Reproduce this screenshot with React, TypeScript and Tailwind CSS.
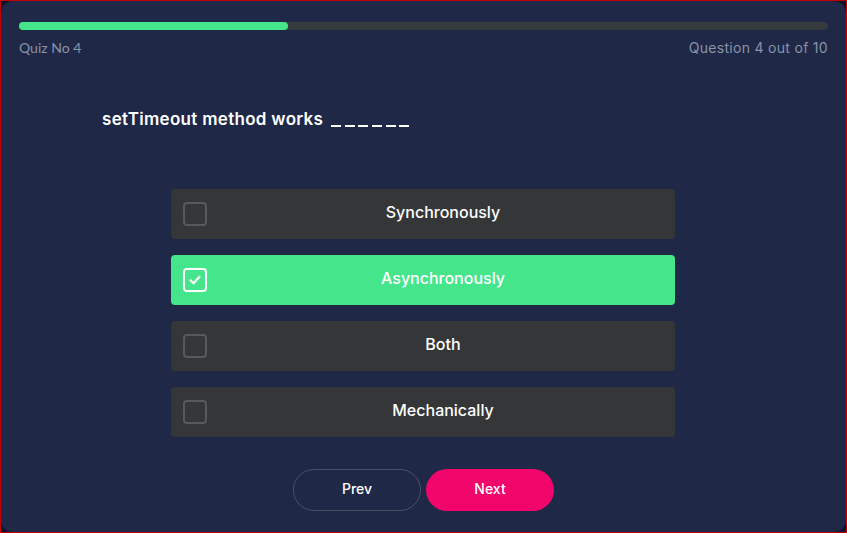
import React, { useState } from "react";

const options = ["Synchronously", "Asynchronously", "Both", "Mechanically"];

const CheckBox = ({ checked }: { checked: boolean }) => {
  return (
    <span
      className={`ml-3 flex h-6 w-6 shrink-0 items-center justify-center rounded-[4px] border-2 ${
        checked ? "border-white" : "border-[#56595d]"
      }`}
    >
      {checked && (
        <svg width="14" height="14" viewBox="0 0 14 14" fill="none">
          <path
            d="M2.5 7.3 L5.6 10.3 L11.5 3.8"
            stroke="white"
            strokeWidth="2.2"
            strokeLinecap="round"
            strokeLinejoin="round"
          />
        </svg>
      )}
    </span>
  );
};

const App = () => {
  const [selected, setSelected] = useState<number>(1);

  return (
    <div className="h-[533px] w-[847px] border border-[#c40000] bg-[#0f1130]">
      <div
        className="flex h-full w-full flex-col rounded-[12px] bg-[#1f2847] px-[18px] pt-[21px]"
        style={{ fontFamily: "Inter, 'Open Sans', sans-serif" }}
      >
        {/* progress */}
        <div className="h-2 w-full rounded-full bg-[#353a3d]">
          <div className="h-2 w-[269px] rounded-full bg-[#45e68b]"></div>
        </div>
        <div className="mt-[8px] flex items-center justify-between text-[14px] leading-5 text-[#8b93a7]">
          <span style={{ fontFamily: "Lato, sans-serif" }}>Quiz No 4</span>
          <span className="tracking-[0.3px]">Question 4 out of 10</span>
        </div>

        <div className="mt-[49px] pl-[83px] text-[17px] font-semibold leading-6 tracking-[0.3px] text-white">
          setTimeout method works
          <span className="ml-[8px] inline-flex gap-[3.6px] align-[-2px]">
            {[0, 1, 2, 3, 4, 5].map((d) => (
              <span key={d} className="h-[2px] w-[10px] bg-white"></span>
            ))}
          </span>
        </div>

        <div className="ml-[152px] mt-[58px] flex w-[504px] flex-col gap-4">
          {options.map((opt, i) => (
            <div
              key={opt}
              onClick={() => setSelected(i)}
              className={`flex h-[50px] cursor-pointer items-center rounded-[4px] ${
                selected === i ? "bg-[#45e68b]" : "bg-[#343638]"
              }`}
            >
              <CheckBox checked={selected === i} />
              <span className="flex-1 pb-1 pl-1 text-center text-[16px] font-medium text-white">
                {opt}
              </span>
            </div>
          ))}
        </div>

        <div className="mt-8 flex justify-center gap-[5px]">
          <button className="h-[42px] w-[128px] rounded-full border border-[#4a5165] pb-1 text-[14px] font-medium text-white">
            Prev
          </button>
          <button className="h-[42px] w-[128px] rounded-full bg-[#f2066b] pb-1 text-[14px] font-medium text-white">
            Next
          </button>
        </div>
      </div>
    </div>
  );
};

export default App;
